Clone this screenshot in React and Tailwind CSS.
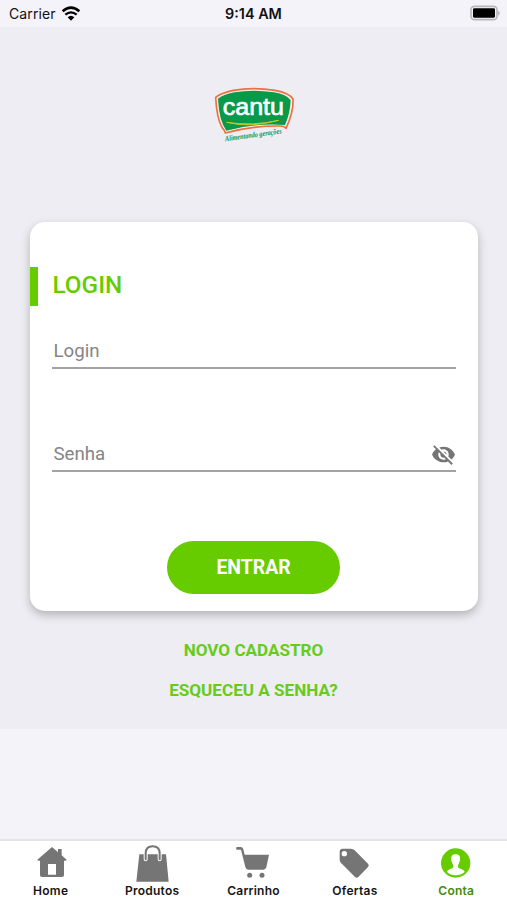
import { useState } from "react";
import { MdVisibilityOff, MdVisibility } from "react-icons/md";

function WifiIcon() {
  return (
    <svg width="20" height="15" viewBox="183 15 60 45" fill="none" stroke="#000">
      <path d="M188 31 Q213 9 238 31" strokeWidth="8" />
      <path d="M196 41 Q213 27 230 41" strokeWidth="7" />
      <path d="M203 49 Q213 40 223 49 L213 59 Z" fill="#000" stroke="none" />
    </svg>
  );
}

function BatteryIcon() {
  return (
    <svg width="31" height="16" viewBox="648 15 93 48">
      <rect x="651" y="19" width="78" height="40" rx="10" fill="#f4f3f9" stroke="#b8b8bc" strokeWidth="5" />
      <rect x="657" y="25" width="66" height="28" rx="4" fill="#000" />
      <path d="M733 32 Q741 39 733 47 Z" fill="#a5a5a9" />
    </svg>
  );
}

function Logo() {
  return (
    <svg width="80" height="58" viewBox="42 33 240 174">
      <path
        d="M47 67 Q62 54 100 46 Q158 36 225 46 Q268 54 279 72 Q280 94 275 112 Q269 138 258 160 Q253 153 240 153 Q158 152 76 174 Q75 167 66 157 Q50 130 47 67 Z"
        fill="#fdeee2"
        stroke="#ec7043"
        strokeWidth="5"
        strokeLinejoin="round"
      />
      <path
        d="M54 71 Q68 59 104 52 Q158 42 222 52 Q260 59 272 75 Q271 114 255 150 Q162 144 79 167 Q57 136 54 71 Z"
        fill="#08994a"
      />
      <path d="M80 142 Q150 160 236 136 Q158 154 80 142 Z" fill="#c3c52b" stroke="#c3c52b" strokeWidth="3" />
      <text
        x="68"
        y="121"
        textLength="184"
        lengthAdjust="spacingAndGlyphs"
        fill="#fff"
        stroke="#fff"
        strokeWidth="2"
        fontSize="73"
        className="font-['Liberation_Sans',sans-serif]"
      >
        cantu
      </text>
      <text
        x="76"
        y="199"
        transform="rotate(-8 76 199)"
        textLength="171"
        lengthAdjust="spacingAndGlyphs"
        fill="#08994a"
        fontSize="23"
        className="font-['Liberation_Serif',serif] font-bold italic"
      >
        Alimentando gerações
      </text>
    </svg>
  );
}

function HomeIcon() {
  return (
    <svg width="36" height="40" viewBox="97 39 108 120" fill="#757575">
      <path
        fillRule="evenodd"
        d="M154 51 L172 67 V57 H183 V76 L198 89 Q198 93 190 92 V136 Q190 141 184 141 H124 Q118 141 118 136 V92 Q110 93 110 89 Z M142 102 V134 H166 V102 Z"
      />
    </svg>
  );
}

function BagIcon() {
  return (
    <svg width="36" height="40" viewBox="403 39 108 120">
      <path d="M419 73 H499 L507 155 H410 Z" fill="#757575" />
      <path d="M438 88 V72 M480 88 V72" fill="none" stroke="#fff" strokeWidth="12" strokeLinecap="round" />
      <path d="M438 88 V70 Q438 49 459 49 Q480 49 480 70 V88" fill="none" stroke="#757575" strokeWidth="6" strokeLinecap="round" />
    </svg>
  );
}

function CartIcon() {
  return (
    <svg width="36" height="40" viewBox="706 39 108 120" fill="#757575">
      <path d="M711 51 H723 Q729 51 731 58 L735 74 H808 L800 112 Q798 119 791 119 H746 Q739 119 737 111 L724 59 H711 Q708 55 711 51 Z" />
      <circle cx="750" cy="136" r="7.5" />
      <circle cx="787" cy="136" r="7.5" />
    </svg>
  );
}

function TagIcon() {
  return (
    <svg width="36" height="40" viewBox="250 39 108 120">
      <path
        d="M267 56 H292 Q298 56 303 61 L343 101 Q348 106 343 111 L314 141 Q309 146 304 141 L263 100 Q258 95 258 89 V65 Q258 56 267 56 Z"
        fill="#757575"
      />
      <circle cx="272" cy="71" r="8" fill="#fff" />
    </svg>
  );
}

function AccountIcon() {
  return (
    <svg width="36" height="40" viewBox="552 39 108 120">
      <circle cx="605" cy="99" r="44" fill="#66cc00" />
      <path
        d="M605 73 C615 73 619 79 618 87 Q620 92 616 96 Q614 103 612 106 V112 C617 118 630 117 632 126 Q620 136 605 136 Q590 136 579 126 C581 117 593 118 598 112 V106 Q596 103 594 96 Q590 92 592 87 C591 79 595 73 605 73 Z"
        fill="#fff"
      />
    </svg>
  );
}

const tabs = [
  { label: "Home", icon: HomeIcon },
  { label: "Produtos", icon: BagIcon },
  { label: "Carrinho", icon: CartIcon },
  { label: "Ofertas", icon: TagIcon },
  { label: "Conta", icon: AccountIcon },
];

export default function App() {
  const [login, setLogin] = useState("");
  const [password, setPassword] = useState("");
  const [showPassword, setShowPassword] = useState(false);
  const [active, setActive] = useState("Conta");

  return (
    <div className="flex h-[900px] w-full flex-col bg-[#f4f3f9] font-[Roboto,sans-serif]">
      <header className="grid h-[27px] shrink-0 grid-cols-3 items-center pr-1.5 pl-2 font-[Inter,sans-serif] text-[#111]">
        <div className="flex items-center gap-[5px] pl-px text-[14px]">
          <span className="tracking-[0.1px]">Carrier</span>
          <WifiIcon />
        </div>
        <span className="pt-px pr-0.5 text-center text-[14.4px] font-semibold">9:14 AM</span>
        <div className="flex justify-end pb-0.5">
          <BatteryIcon />
        </div>
      </header>

      <main className="flex h-[702px] shrink-0 flex-col items-center bg-[#eeedf3] pt-[59px]">
        <Logo />

        <section className="mt-[78px] flex h-[389px] w-[448px] shrink-0 flex-col rounded-[15px] bg-white pt-[45px] shadow-[0_4px_10px_rgba(0,0,0,0.25)]">
          <div className="flex h-[39px] items-center border-l-8 border-[#66cc00] pb-0.5 pl-[15px]">
            <h1 className="text-[24.3px] font-medium text-[#66cc00]">LOGIN</h1>
          </div>

          <div className="mx-[22px] mt-[26px] flex h-[37px] items-center border-b-2 border-[#a3a3a3] pt-[3px]">
            <input
              value={login}
              onChange={(e) => setLogin(e.target.value)}
              placeholder="Login"
              className="w-full pl-0.5 text-[18.7px] outline-none placeholder:text-[#858585]"
            />
          </div>

          <div className="mx-[22px] mt-[66px] flex h-[37px] items-center border-b-2 border-[#a3a3a3] pt-[3px]">
            <input
              type={showPassword ? "text" : "password"}
              value={password}
              onChange={(e) => setPassword(e.target.value)}
              placeholder="Senha"
              className="min-w-0 flex-1 pl-0.5 text-[18.7px] outline-none placeholder:text-[#858585]"
            />
            <button onClick={() => setShowPassword(!showPassword)} className="text-[#757575]">
              {showPassword ? <MdVisibility size={25} /> : <MdVisibilityOff size={25} />}
            </button>
          </div>

          <button className="mx-auto mt-[69px] h-[53px] w-[173px] rounded-full bg-[#66cc00] text-[19.4px] font-bold text-white">
            ENTRAR
          </button>
        </section>

        <button className="mt-[27px] text-[17.1px] leading-6 font-bold text-[#66cc18]">NOVO CADASTRO</button>
        <button className="mt-4 text-[17.1px] leading-6 font-bold text-[#66cc18]">ESQUECEU A SENHA?</button>
      </main>

      <nav className="mt-auto grid h-[61px] grid-cols-5 border-t-2 border-[#e4e3e8] bg-white font-[Inter,sans-serif]">
        {tabs.map(({ label, icon: Icon }) => (
          <button
            key={label}
            onClick={() => setActive(label)}
            className={`flex flex-col items-center pt-0.5 text-[12px] leading-[15px] font-semibold tracking-[0.25px] ${
              label === active ? "text-[#458b0b]" : "text-[#151515]"
            }`}
          >
            <Icon />
            <span>{label}</span>
          </button>
        ))}
      </nav>
    </div>
  );
}
